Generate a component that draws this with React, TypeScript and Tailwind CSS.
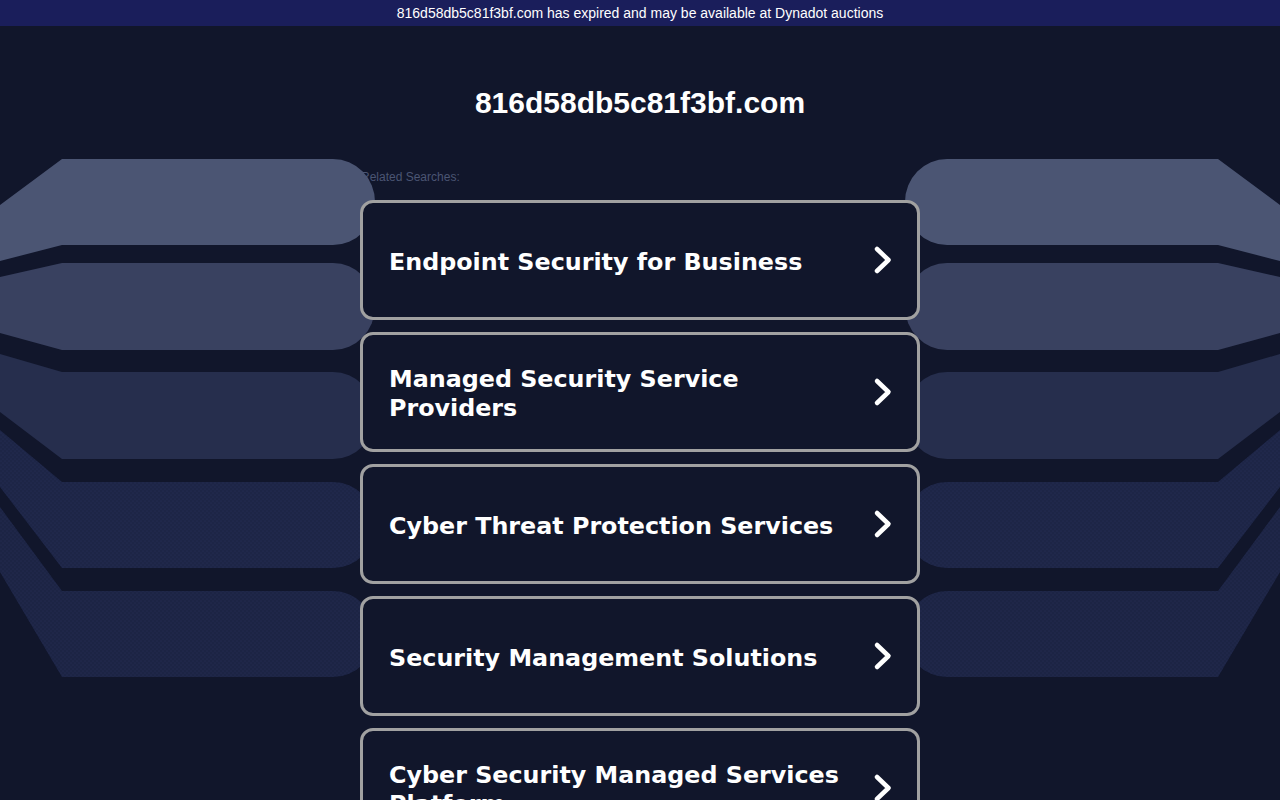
import React from "react";

type Band = { t: number; b: number; lt: number; lb: number; color: string; dots?: boolean };

const bands: Band[] = [
  { t: 159, b: 245, lt: 205, lb: 261, color: "#4b5573" },
  { t: 263, b: 350, lt: 277, lb: 333, color: "#394160" },
  { t: 372, b: 459, lt: 354, lb: 412, color: "#262e4d" },
  { t: 482, b: 568, lt: 430, lb: 487, color: "#1d2546", dots: true },
  { t: 591, b: 677, lt: 507, lb: 572, color: "#1c2444", dots: true },
];

function bandPath(b: Band) {
  const mid = (b.t + b.b) / 2;
  const ry = (b.b - b.t) / 2;
  return `M0,${b.lt} L62,${b.t} L333,${b.t} A42,${ry} 0 0 1 375,${mid} A42,${ry} 0 0 1 333,${b.b} L62,${b.b} L0,${b.lb} Z`;
}

function Decorations() {
  const shapes = (
    <>
      {bands.map((b, i) => (
        <g key={i}>
          <path d={bandPath(b)} fill={b.color} />
          {b.dots && <path d={bandPath(b)} fill="url(#dots)" />}
        </g>
      ))}
    </>
  );
  return (
    <svg
      className="absolute left-0 top-0 pointer-events-none"
      width="1280"
      height="800"
      viewBox="0 0 1280 800"
    >
      <defs>
        <pattern id="dots" width="4" height="4" patternUnits="userSpaceOnUse">
          <circle cx="1" cy="1" r="0.5" fill="#27305a" />
          <circle cx="3" cy="3" r="0.5" fill="#27305a" />
        </pattern>
      </defs>
      {shapes}
      <g transform="translate(1280,0) scale(-1,1)">{shapes}</g>
    </svg>
  );
}

function Chevron() {
  return (
    <svg width="20" height="30" viewBox="0 0 20 30" className="shrink-0">
      <polyline
        points="4,4 15.5,15 4,26"
        fill="none"
        stroke="#ffffff"
        strokeWidth="4.5"
        strokeLinecap="round"
        strokeLinejoin="round"
      />
    </svg>
  );
}

const items = [
  "Endpoint Security for Business",
  "Managed Security Service Providers",
  "Cyber Threat Protection Services",
  "Security Management Solutions",
  "Cyber Security Managed Services Platform",
];

export default function App() {
  return (
    <div className="relative w-full h-[800px] overflow-hidden bg-[#11162b]">
      <div className="relative z-10 h-[26px] bg-[#1a1e5b] flex items-center justify-center text-white text-[14px] font-['Liberation_Sans',Arial,sans-serif]">
        816d58db5c81f3bf.com has expired and may be available at Dynadot auctions
      </div>
      <Decorations />
      <div className="relative z-10 flex flex-col items-center">
        <h1 className="mt-[60px] text-[30px] leading-[34px] font-bold text-white font-['Liberation_Sans',Arial,sans-serif]">
          816d58db5c81f3bf.com
        </h1>
        <div className="w-[560px] mt-[50px]">
          <div className="pl-[1px] text-[12px] leading-[14px] text-[#4b5573] font-['Liberation_Sans',Arial,sans-serif]">
            Related Searches:
          </div>
          <div className="mt-[16px] flex flex-col gap-[12px]">
            {items.map((t) => (
              <div
                key={t}
                className="h-[120px] shrink-0 rounded-[13px] border-[3px] border-[#a1a1a1] bg-[#11162b] flex items-center pl-[26px] pr-[24px] gap-[26px]"
              >
                <div className="flex-1 pt-[4px] text-white text-[23.8px] leading-[29px] font-bold font-['DejaVu_Sans',Verdana,sans-serif]">
                  {t}
                </div>
                <Chevron />
              </div>
            ))}
          </div>
        </div>
      </div>
    </div>
  );
}
